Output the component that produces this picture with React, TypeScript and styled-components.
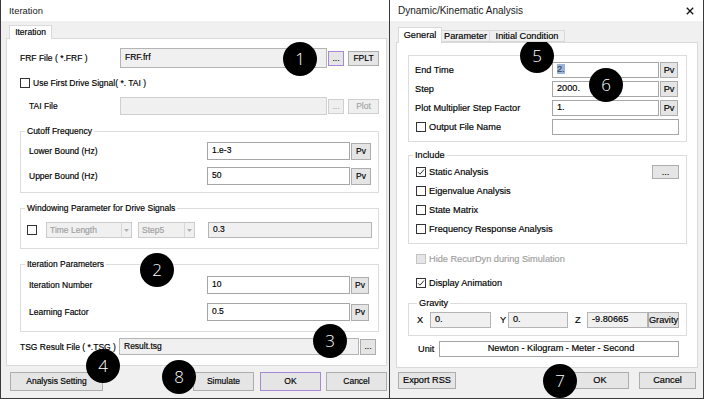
import React from "react";
import styled, { createGlobalStyle } from "styled-components";

const GlobalStyle = createGlobalStyle`
  html, body { margin: 0; padding: 0; background: #ffffff; }
  body { font-family: "Liberation Sans", Arial, sans-serif; color: #000; }
  * { box-sizing: border-box; }
`;

const Page = styled.div`
  position: relative;
  display: flex;
  align-items: flex-start;
  width: 705px;
  height: 401px;
  overflow: hidden;
  background: #ffffff;
`;

const Window = styled.div<{ $w: number; $fs: number; $noLeft?: boolean }>`
  display: flex;
  flex-direction: column;
  width: ${(p) => p.$w}px;
  height: 399px;
  flex-shrink: 0;
  background: #f0f0f0;
  border: 1px solid #3a3a3a;
  border-top: none;
  ${(p) => (p.$noLeft ? "border-left: none;" : "")}
  font-size: ${(p) => p.$fs}px;
  -webkit-text-stroke: 0.17px currentColor;
`;

const TitleBar = styled.div<{ $pl: number; $pr: number; $fs: number }>`
  display: flex;
  align-items: center;
  justify-content: space-between;
  height: 21px;
  flex-shrink: 0;
  background: #ffffff;
  padding: 0 ${(p) => p.$pr}px 0 ${(p) => p.$pl}px;
  font-size: ${(p) => p.$fs}px;
  color: #1a1a1a;
  -webkit-text-stroke: 0;
`;

const Body = styled.div<{ $pl: number; $pr: number; $pt: number }>`
  flex: 1;
  display: flex;
  flex-direction: column;
  padding: ${(p) => p.$pt}px ${(p) => p.$pr}px 0 ${(p) => p.$pl}px;
`;

const TabStrip = styled.div<{ $pl: number }>`
  display: flex;
  align-items: flex-end;
  padding-left: ${(p) => p.$pl}px;
  position: relative;
  z-index: 1;
`;

const Tab = styled.div<{ $w: number; $h: number; $active?: boolean }>`
  display: flex;
  align-items: center;
  justify-content: center;
  width: ${(p) => p.$w}px;
  height: ${(p) => p.$h}px;
  border: 1px solid #d9d9d9;
  border-bottom: ${(p) => (p.$active ? "none" : "1px solid #d9d9d9")};
  background: ${(p) => (p.$active ? "#ffffff" : "#f0f0f0")};
  margin-bottom: ${(p) => (p.$active ? "-1px" : "0")};
  margin-right: -1px;
  padding-bottom: ${(p) => (p.$active ? 2 : 0)}px;
  white-space: nowrap;
`;

const Panel = styled.div<{ $pl: number; $pr: number }>`
  flex: 1;
  display: flex;
  flex-direction: column;
  background: #ffffff;
  border: 1px solid #d9d9d9;
  padding: 0 ${(p) => p.$pr}px 0 ${(p) => p.$pl}px;
`;

const Row = styled.div<{ $mt?: number; $h: number; $ml?: number }>`
  display: flex;
  align-items: center;
  height: ${(p) => p.$h}px;
  margin-top: ${(p) => p.$mt ?? 0}px;
  margin-left: ${(p) => p.$ml ?? 0}px;
  flex-shrink: 0;
  white-space: nowrap;
`;

const Label = styled.span<{ $w?: number; $ml?: number; $dim?: boolean }>`
  ${(p) => (p.$w !== undefined ? `width: ${p.$w}px;` : "")}
  margin-left: ${(p) => p.$ml ?? 0}px;
  flex-shrink: 0;
  color: ${(p) => (p.$dim ? "#a0a0a0" : "#000")};
  white-space: nowrap;
`;

type FieldKind = "normal" | "readonly" | "disabled";

const Field = styled.div<{ $w: number; $h: number; $v?: FieldKind; $ml?: number; $center?: boolean }>`
  display: flex;
  align-items: center;
  justify-content: ${(p) => (p.$center ? "center" : "flex-start")};
  width: ${(p) => p.$w}px;
  height: ${(p) => p.$h}px;
  margin-left: ${(p) => p.$ml ?? 0}px;
  flex-shrink: 0;
  padding: 0 0 2px 4px;
  border: 1px solid ${(p) => (p.$v === "disabled" ? "#cfcfcf" : p.$v === "readonly" ? "#b4b4b4" : "#a6a6a6")};
  background: ${(p) => (p.$v === "disabled" ? "#f0f0f0" : p.$v === "readonly" ? "#f0f0f0" : "#ffffff")};
  color: ${(p) => (p.$v === "disabled" ? "#6d6d6d" : "#000")};
  overflow: hidden;
`;

const Selected = styled.span`
  background: #9db4d8;
  color: #394a68;
`;

const Btn = styled.button<{ $w: number; $h: number; $ml?: number; $focus?: boolean; $off?: boolean }>`
  display: flex;
  align-items: center;
  justify-content: center;
  width: ${(p) => p.$w}px;
  height: ${(p) => p.$h}px;
  margin: 0 0 0 ${(p) => p.$ml ?? 0}px;
  padding: 0 0 1px 0;
  flex-shrink: 0;
  font: inherit;
  color: ${(p) => (p.$off ? "#a6a6a6" : "#000")};
  background: ${(p) => (p.$off ? "#efefef" : "#e5e5e5")};
  border: 1px solid ${(p) => (p.$focus ? "#a688d6" : p.$off ? "#d0d0d0" : "#adadad")};
  white-space: nowrap;
`;

const Spacer = styled.div`
  flex: 1;
`;

const Box = styled.span<{ $off?: boolean }>`
  display: inline-flex;
  align-items: center;
  justify-content: center;
  width: 10px;
  height: 10px;
  flex-shrink: 0;
  border: 1px solid ${(p) => (p.$off ? "#c4c4c4" : "#333333")};
  background: ${(p) => (p.$off ? "#e6e6e6" : "#ffffff")};
  margin-right: 3px;
`;

const Combo = styled.div<{ $w: number; $h: number; $ml: number }>`
  display: flex;
  align-items: stretch;
  width: ${(p) => p.$w}px;
  height: ${(p) => p.$h}px;
  margin-left: ${(p) => p.$ml}px;
  border: 1px solid #cccccc;
  background: #f0f0f0;
  color: #a0a0a0;
  flex-shrink: 0;
`;

const ComboText = styled.div`
  flex: 1;
  display: flex;
  align-items: center;
  padding: 0 0 1px 3px;
`;

const ComboArrow = styled.div`
  width: 10px;
  display: flex;
  align-items: center;
  justify-content: center;
  border-left: 1px solid #d8d8d8;
`;

const Group = styled.fieldset<{ $mt: number }>`
  margin: ${(p) => p.$mt}px 0 0 0;
  padding: 0;
  border: 1px solid #dcdcdc;
  min-width: 0;
  flex-shrink: 0;
`;

const Legend = styled.legend<{ $ml: number }>`
  margin-left: ${(p) => p.$ml}px;
  padding: 0 2px;
  line-height: 11px;
  height: 11px;
  white-space: nowrap;
`;

const GroupBody = styled.div<{ $pt: number; $pb: number; $pl: number; $gap?: number }>`
  display: flex;
  flex-direction: column;
  gap: ${(p) => p.$gap ?? 0}px;
  padding: ${(p) => p.$pt}px 0 ${(p) => p.$pb}px ${(p) => p.$pl}px;
`;

const PlainGroup = styled.div<{ $mt: number; $pt: number; $pb: number; $pl: number; $gap: number }>`
  display: flex;
  flex-direction: column;
  gap: ${(p) => p.$gap}px;
  margin-top: ${(p) => p.$mt}px;
  padding: ${(p) => p.$pt}px 0 ${(p) => p.$pb}px ${(p) => p.$pl}px;
  border: 1px solid #dcdcdc;
  flex-shrink: 0;
`;

const Footer = styled.div<{ $mt: number; $pb: number; $pl: number; $pr: number }>`
  display: flex;
  align-items: center;
  flex-shrink: 0;
  margin-top: ${(p) => p.$mt}px;
  padding: 0 ${(p) => p.$pr}px ${(p) => p.$pb}px ${(p) => p.$pl}px;
`;

const Badge = styled.div<{ $x: number; $y: number }>`
  position: absolute;
  left: ${(p) => p.$x - 17}px;
  top: ${(p) => p.$y - 17}px;
  width: 34px;
  height: 34px;
  border-radius: 50%;
  background: #000;
  color: #fff;
  display: flex;
  align-items: center;
  justify-content: center;
  font-family: "Open Sans", "DejaVu Sans", sans-serif;
  font-weight: 300;
  font-size: 17px;
  line-height: 1;
  padding-bottom: 1px;
`;

const Check = ({ checked, off }: { checked?: boolean; off?: boolean }) => (
  <Box $off={off}>
    {checked ? (
      <svg width="8" height="8" viewBox="0 0 8 8">
        <path d="M1 4.2 L3 6.2 L7 1.5" fill="none" stroke="#333" strokeWidth="1" />
      </svg>
    ) : null}
  </Box>
);

const Arrow = () => (
  <svg width="5" height="3" viewBox="0 0 5 3">
    <path d="M0 0 H5 L2.5 3 Z" fill="#b0b0b0" />
  </svg>
);

const CloseIcon = () => (
  <svg width="8" height="8" viewBox="0 0 8 8">
    <path d="M0.8 0.8 L7.2 7.2 M7.2 0.8 L0.8 7.2" stroke="#111" strokeWidth="1.3" />
  </svg>
);

const badges: [string, number, number][] = [
  ["1", 300, 59],
  ["2", 157, 270],
  ["3", 330, 341],
  ["4", 103, 366],
  ["8", 179, 377],
  ["5", 537, 56],
  ["6", 606, 85],
  ["7", 560, 381],
];

function IterationDialog() {
  return (
    <Window $w={390} $fs={8.5}>
      <TitleBar $pl={8} $pr={8} $fs={9.4}>
        <span>Iteration</span>
      </TitleBar>
      <Body $pl={5} $pr={2} $pt={4}>
        <TabStrip $pl={3}>
          <Tab $w={43} $h={14} $active>
            Iteration
          </Tab>
        </TabStrip>
        <Panel $pl={13} $pr={7}>
          <Row $mt={9} $h={20}>
            <Label $w={100}>FRF File ( *.FRF )</Label>
            <Field $w={207} $h={20} $v="readonly">
              FRF.frf
            </Field>
            <Btn $w={16} $h={15} $ml={1} $focus>
              ...
            </Btn>
            <Btn $w={31} $h={15} $ml={4}>
              FPLT
            </Btn>
          </Row>
          <Row $mt={9} $h={12}>
            <Check />
            <Label>Use First Drive Signal( *. TAI )</Label>
          </Row>
          <Row $mt={8} $h={18} $ml={9}>
            <Label $w={91}>TAI File</Label>
            <Field $w={207} $h={18} $v="disabled" />
            <Btn $w={16} $h={15} $ml={1} $off>
              ...
            </Btn>
            <Btn $w={31} $h={15} $ml={4} $off>
              Plot
            </Btn>
          </Row>

          <Group $mt={11}>
            <Legend $ml={4}>Cutoff Frequency</Legend>
            <GroupBody $pt={5} $pb={7} $pl={8} $gap={7}>
              <Row $h={18}>
                <Label $w={178}>Lower Bound (Hz)</Label>
                <Field $w={143} $h={18}>1.e-3</Field>
                <Btn $w={20} $h={17} $ml={1}>Pv</Btn>
              </Row>
              <Row $h={18}>
                <Label $w={178}>Upper Bound (Hz)</Label>
                <Field $w={143} $h={18}>50</Field>
                <Btn $w={20} $h={17} $ml={1}>Pv</Btn>
              </Row>
            </GroupBody>
          </Group>

          <Group $mt={10}>
            <Legend $ml={4}>Windowing Parameter for Drive Signals</Legend>
            <GroupBody $pt={8} $pb={10} $pl={6}>
              <Row $h={16}>
                <Check />
                <Combo $w={86} $h={16} $ml={6}>
                  <ComboText>Time Length</ComboText>
                  <ComboArrow>
                    <Arrow />
                  </ComboArrow>
                </Combo>
                <Combo $w={57} $h={16} $ml={6}>
                  <ComboText>Step5</ComboText>
                  <ComboArrow>
                    <Arrow />
                  </ComboArrow>
                </Combo>
                <Field $w={164} $h={16} $ml={13} $v="readonly">
                  0.3
                </Field>
              </Row>
            </GroupBody>
          </Group>

          <Group $mt={10}>
            <Legend $ml={4}>Iteration Parameters</Legend>
            <GroupBody $pt={6} $pb={10} $pl={8} $gap={9}>
              <Row $h={18}>
                <Label $w={178}>Iteration Number</Label>
                <Field $w={143} $h={18}>10</Field>
                <Btn $w={18} $h={17} $ml={1}>Pv</Btn>
              </Row>
              <Row $h={18}>
                <Label $w={178}>Learning Factor</Label>
                <Field $w={143} $h={18}>0.5</Field>
                <Btn $w={18} $h={17} $ml={1}>Pv</Btn>
              </Row>
            </GroupBody>
          </Group>

          <Row $mt={6} $h={17}>
            <Label $w={99}>TSG Result File ( *.TSG )</Label>
            <Field $w={240} $h={17} $v="readonly">
              Result.tsg
            </Field>
            <Btn $w={16} $h={16} $ml={1}>
              ...
            </Btn>
          </Row>
        </Panel>
        <Footer $mt={6} $pb={7} $pl={4} $pr={0}>
          <Btn $w={93} $h={19}>Analysis Setting</Btn>
          <Spacer />
          <Btn $w={61} $h={19}>Simulate</Btn>
          <Btn $w={61} $h={19} $ml={6} $focus>
            OK
          </Btn>
          <Btn $w={61} $h={19} $ml={5}>
            Cancel
          </Btn>
        </Footer>
      </Body>
    </Window>
  );
}

function AnalysisDialog() {
  return (
    <Window $w={314} $fs={9.2} $noLeft>
      <TitleBar $pl={8} $pr={9} $fs={10}>
        <span>Dynamic/Kinematic Analysis</span>
        <CloseIcon />
      </TitleBar>
      <Body $pl={6} $pr={5} $pt={6}>
        <TabStrip $pl={2}>
          <Tab $w={44} $h={16} $active>
            General
          </Tab>
          <Tab $w={49} $h={12}>
            Parameter
          </Tab>
          <Tab $w={76} $h={12}>
            Initial Condition
          </Tab>
        </TabStrip>
        <Panel $pl={11} $pr={10}>
          <PlainGroup $mt={12} $pt={6} $pb={6} $pl={6} $gap={3}>
            <Row $h={16}>
              <Label $w={137}>End Time</Label>
              <Field $w={107} $h={16}>
                <Selected>2.</Selected>
              </Field>
              <Btn $w={18} $h={16} $ml={1}>Pv</Btn>
            </Row>
            <Row $h={16}>
              <Label $w={137}>Step</Label>
              <Field $w={107} $h={16}>2000.</Field>
              <Btn $w={18} $h={16} $ml={1}>Pv</Btn>
            </Row>
            <Row $h={16}>
              <Label $w={137}>Plot Multiplier Step Factor</Label>
              <Field $w={107} $h={16}>1.</Field>
              <Btn $w={18} $h={16} $ml={1}>Pv</Btn>
            </Row>
            <Row $h={16} $ml={1}>
              <Check />
              <Label $w={123}>Output File Name</Label>
              <Field $w={127} $h={16} />
            </Row>
          </PlainGroup>

          <Group $mt={8}>
            <Legend $ml={4}>Include</Legend>
            <GroupBody $pt={3} $pb={6} $pl={7} $gap={3}>
              <Row $h={16}>
                <Check checked />
                <Label $w={223}>Static Analysis</Label>
                <Btn $w={27} $h={14}>...</Btn>
              </Row>
              <Row $h={16}>
                <Check />
                <Label>Eigenvalue Analysis</Label>
              </Row>
              <Row $h={16}>
                <Check />
                <Label>State Matrix</Label>
              </Row>
              <Row $h={16}>
                <Check />
                <Label>Frequency Response Analysis</Label>
              </Row>
            </GroupBody>
          </Group>

          <Row $mt={7} $h={16} $ml={8}>
            <Check off />
            <Label $dim>Hide RecurDyn during Simulation</Label>
          </Row>
          <Row $mt={8} $h={16} $ml={8}>
            <Check checked />
            <Label>Display Animation</Label>
          </Row>

          <Group $mt={7}>
            <Legend $ml={8}>Gravity</Legend>
            <GroupBody $pt={3} $pb={7} $pl={8}>
              <Row $h={16}>
                <Label $w={13}>X</Label>
                <Field $w={61} $h={16} $v="readonly">0.</Field>
                <Label $w={8} $ml={9}>Y</Label>
                <Field $w={60} $h={16} $v="readonly">0.</Field>
                <Label $w={12} $ml={7}>Z</Label>
                <Field $w={61} $h={16} $v="readonly">-9.80665</Field>
                <Btn $w={31} $h={16}>Gravity</Btn>
              </Row>
            </GroupBody>
          </Group>

          <Row $mt={5} $h={16} $ml={10}>
            <Label $w={21}>Unit</Label>
            <Field $w={240} $h={16} $center>
              Newton - Kilogram - Meter - Second
            </Field>
          </Row>
        </Panel>
        <Footer $mt={4} $pb={9} $pl={2} $pr={2}>
          <Btn $w={58} $h={17}>Export RSS</Btn>
          <Spacer />
          <Btn $w={58} $h={17}>OK</Btn>
          <Btn $w={57} $h={17} $ml={10}>
            Cancel
          </Btn>
        </Footer>
      </Body>
    </Window>
  );
}

export default function App() {
  return (
    <>
      <GlobalStyle />
      <Page>
        <IterationDialog />
        <AnalysisDialog />
        {badges.map(([n, x, y]) => (
          <Badge key={n} $x={x} $y={y}>
            {n}
          </Badge>
        ))}
      </Page>
    </>
  );
}
